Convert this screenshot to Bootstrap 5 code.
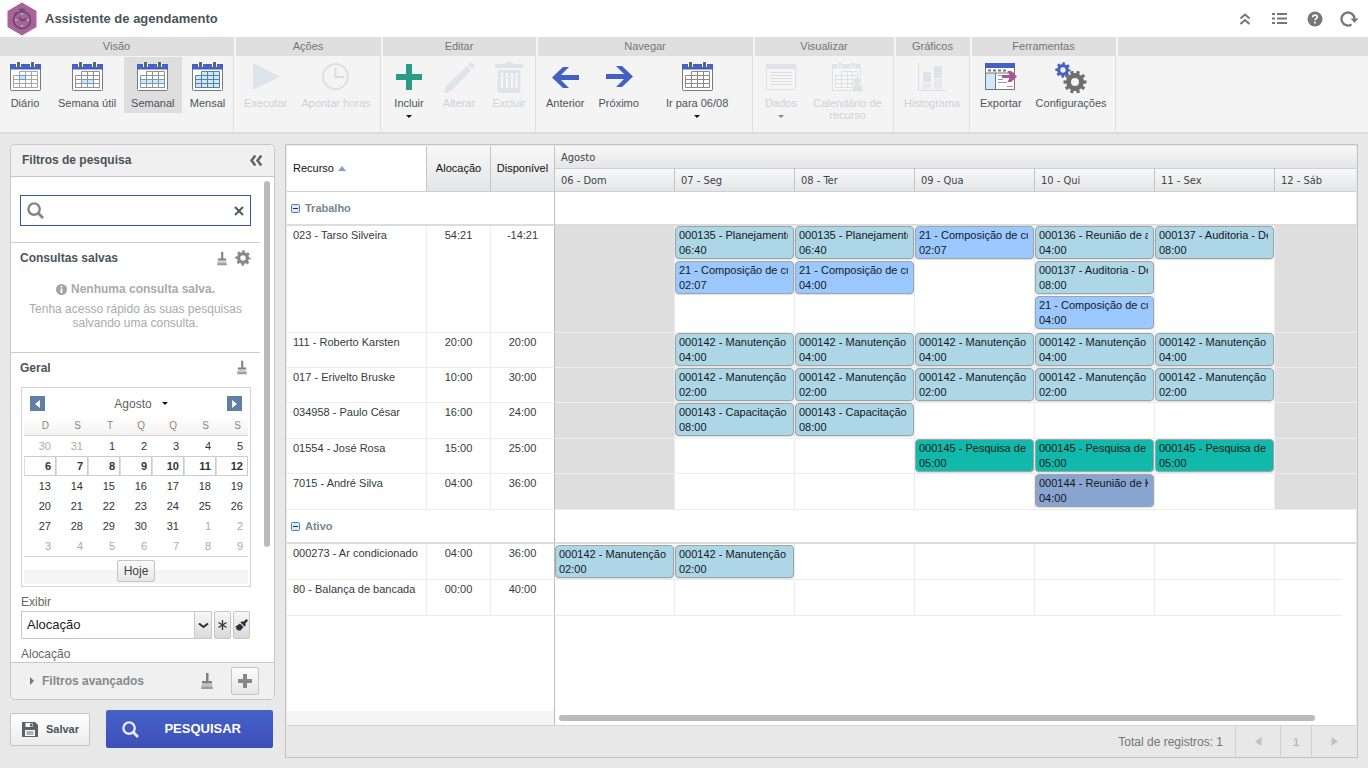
<!DOCTYPE html>
<html lang="pt-BR">
<head>
<meta charset="utf-8">
<meta name="viewport" content="width=device-width, initial-scale=1">
<title>Assistente de agendamento</title>
<link href="https://cdn.jsdelivr.net/npm/bootstrap@5.3.0/dist/css/bootstrap.min.css" rel="stylesheet">
<style>
:root{--ink:#4a5459;--edge:#c8c8c8;--blue:#4460c4}
body{font:12px/14px "Liberation Sans",Arial,sans-serif;color:var(--ink);background:#e8e8e8}
svg{display:block;flex:none}
.app-title{font-size:13px;font-weight:700;line-height:16px;margin:0}
.app-bar{height:37px;padding:0 9px 0 7px}
.tool-set{gap:16px}
.tool-link{width:19px;color:#777;background:none;border:0;padding:0;display:flex;justify-content:center}

/* Ribbon */
.ribbon{background:#f4f4f4;border-bottom:2px solid #dcdcdc;height:97px;font-size:11px}
.ribbon-group{border-right:1px solid #dfdfdf}
.ribbon-group:last-child{border-right:0}
.ribbon-head{height:19px;line-height:19px;background:#dfdfdf;color:#757575;text-align:center;margin:0 0 0 2px;font-size:11px;font-weight:400}
.ribbon-group:first-child .ribbon-head{margin-left:0}
.ribbon-body{padding:1px 0 0 3px}
.ribbon-group:first-child .ribbon-body{padding-left:0;gap:1px}
.w-view{width:234px}.w-act{width:147px}.w-edit{width:155px}.w-nav{width:217px}
.w-vis{width:141px}.w-graph{width:76px}.w-tools{width:146px}
.rb{min-width:50px;height:56px;padding:5px 7px 0;border:0;background:none;color:var(--ink);font-size:11px;line-height:12px;display:flex;flex-direction:column;align-items:center;gap:6px;white-space:nowrap}
.rb.active{background:#dedede}
.rb:disabled{color:#d0d2d4}
.rb.spaced{margin-left:13px}
.rb.two-line{white-space:normal;width:83px}
.icon-tall{margin-bottom:-2px}
.icon-taller{margin-bottom:-4px}
.drop-mark{width:0;height:0;border:3px solid transparent;border-top-color:#111;border-bottom:0}
.rb:disabled .drop-mark{border-top-color:#888}

/* Filters */
.work{padding:10px;gap:10px}
.side{width:265px}
.filter-box{border:1px solid var(--edge);border-radius:5px;background:#fff;overflow:hidden}
.filter-head{height:32px;background:#f0f0f0;border-bottom:1px solid var(--edge);padding:0 12px 1px 11px}
.filter-head h2,.sec-title{font-size:12px;font-weight:700;line-height:14px;margin:0;color:var(--ink)}
.bare{border:0;background:none;padding:0;color:#888}
.filter-scroll{width:249px}
.filter-scroll>section{padding:7px 9px 0}
.sec-line{border-bottom:1px solid #ccc}
.search-sec{height:66px}
.saved-sec{height:110px}
.find{height:31px;border:1px solid #3b51c0;margin-top:11px;padding:0 6px}
.find input{border:0;outline:0;background:none;min-width:0;font-size:12px}
.hint{color:#aaa;text-align:center}
.hint-text{margin:6px 0 0}
.track{width:6px;height:366px;margin:4px 0 0 4px;background:#bababa;border-radius:3px}
.cal{border:1px solid #d4d4d4;padding:0 2px 2px;width:230px;margin:12px 0 0 1px}
.cal-top{height:28px;padding:3px 6px 0 6px}
.month{margin:0 auto;padding-left:10px;gap:10px}
.step{width:15px;height:15px;background:#5d7fa8;border:0;padding:0;color:#fff;display:flex;align-items:center;justify-content:center}
.cal table{width:100%;table-layout:fixed;border-collapse:separate;border-spacing:0;font-size:11px;color:#2e3436}
.cal th{height:20px;font-weight:400;font-size:10px;color:#888;text-align:right;padding:0 7px 0 0;border-bottom:1px solid #d4d4d4;background:linear-gradient(#fff,#f3f3f3)}
.cal td{height:20px;text-align:right;padding:0 5px 0 0;border:0}
.cal .dim{color:#aaa}
.cal .wk td{font-weight:700;border:1px solid #ccc;border-left-color:#ddd;padding-right:4px}
.cal-foot{border-top:1px solid #d4d4d4;height:28px;background:linear-gradient(#fff 50%,#f5f5f5 50%)}
.soft{border:1px solid #c6c6c6;border-radius:2px;background:linear-gradient(#fbfbfb,#e6e6e6);color:#3a4245;padding:0;font-size:12px}
.today{width:38px;height:22px}
.field-label{display:block;margin:8px 0 0 1px;line-height:14px;color:#666}
.show-row{margin:2px 0 0 1px;gap:2px}
.pick{width:191px;height:28px;border:1px solid #c8c8c8;border-radius:0;appearance:none;font-size:13px;color:#222;padding:0 20px 0 5px;
background:url("data:image/svg+xml,%3Csvg xmlns='http://www.w3.org/2000/svg' width='11' height='7'%3E%3Cpath d='M1 1.500l4.500 3.500 4.500-3.500' fill='none' stroke='%23263238' stroke-width='2'/%3E%3C/svg%3E") right 2px center no-repeat,linear-gradient(90deg,#c8c8c8 1px,transparent 1px) right/17px 100% no-repeat,linear-gradient(#f8f8f8,#dadada) right/17px 100% no-repeat,#fff}
.mini{width:17px;height:28px;display:flex;align-items:center;justify-content:center;background:linear-gradient(#f8f8f8,#d8d8d8)}
.filter-area{height:485px;overflow:hidden}
.filter-foot{height:37px;border-top:1px solid var(--edge);background:#f0f0f0;padding:0 15px 0 18px;color:#858585}
.plus-btn{width:28px;height:28px;margin-left:18px;display:flex;align-items:center;justify-content:center}
.action-row{margin-top:10px}
.save{width:80px;height:33px;font-size:11px;font-weight:700;padding:0 10px 0 11px;color:var(--ink);background:linear-gradient(#fff,#ececec)}
.go{width:167px;height:38px;border:0;border-radius:2px;background:linear-gradient(#4562c7,#3f4fba);color:#fff;font-size:13px;font-weight:700;padding:0 32px 0 16px}

/* Schedule */
.sched{border:1px solid #c4c4c4;padding:1px 1px 0;min-width:0}
.plan{width:100%;table-layout:fixed;border-collapse:separate;border-spacing:0;background:#fff;font-size:11px;line-height:15px;color:#333b3e}
.plan th{font-weight:400;height:23px;padding:0 0 0 6px;border-right:1px solid #c4c4c4;border-bottom:1px solid #d0d0d0;background:linear-gradient(#f8f8f8,#e4e5e7);line-height:14px}
.plan th.span-two{color:#111;text-align:center;padding:0 0 1px}
.plan th.sorted{background:#fff;text-align:left;padding-left:6px}
.plan th:last-child{border-right:0}
.plan .tl{font-family:"DejaVu Sans Condensed","Open Sans",sans-serif;color:#3c4548}
.plan .tl th,.plan th.tl{padding-top:1px}
.plan td{padding:0;vertical-align:top;border-right:1px solid #ececec;border-bottom:1px solid #ececec}
.plan td:nth-child(1){padding:2px 0 0 6px;white-space:nowrap}
.plan td:nth-child(2),.plan td:nth-child(3){padding-top:2px;text-align:center}
.plan td:nth-child(3){border-right-color:#bcbcbc}
.plan td:last-child{border-right:0}
.plan tr.h-tall td{height:107px}.plan tr.h-35 td{height:35px}.plan tr.h-36 td{height:36px}
.plan .off td:nth-child(4),.plan .off td:last-child{background:#dedede}
.plan .asset .ev{margin-top:1px}
.plan .asset td:last-child{border-bottom:0;background:linear-gradient(#ececec,#ececec) left bottom/calc(100% - 14px) 1px no-repeat}
.plan tr.kind td{height:34px;border-right:0;border-bottom:2px solid #dcdcdc;padding:0 0 0 4px;vertical-align:middle;font-weight:700;color:#75878f}
.plan tr.kind td:first-child{border-right:1px solid #bcbcbc}
.kind-label{gap:5px}
.ev{display:block;height:33px;border:1px solid #9ba4a8;border-radius:4px;background:#add6e6;color:#15191b;padding:1px 5px 0 3px;text-decoration:none;overflow:hidden;box-shadow:0 1px 1px #0002}
.ev+.ev{margin-top:2px}
.ev span{display:block;overflow:hidden;white-space:nowrap}
.ev.sky{background:#9bc8ff}.ev.teal{background:#10b9aa}.ev.slate{background:#89a4d0}
.rest-left{width:268px;border-right:1px solid #bcbcbc}
.rest-strip{height:14px;background:#f5f5f5}
.h-bar{height:6px;background:#bababa;border-radius:3px;margin:0 41px 4px 4px}
.pager{height:32px;border-top:1px solid #d4d4d4;color:#757575}
.pager-cell{border:0;border-left:1px solid #d0d0d0;background:none;color:#bbb;padding:0;width:45px;display:flex;align-items:center;justify-content:center}
.pager-cell.num{width:31px;font-size:11px;font-weight:700}
</style>
</head>
<body>
<svg width="0" height="0" class="position-absolute" aria-hidden="true">
  <defs>
    <symbol id="calBase" viewBox="0 0 31 29">
      <path d="M.5 7v20.500q0 1 1 1h28q1 0 1-1V7" fill="#fff" stroke="#7a7a7a"/>
      <path d="M0 2h31v5.500H0z" fill="#4460c4"/>
      <path d="M2 4.500h27" stroke="#6c80b5" stroke-dasharray="1 4"/>
      <path d="M6 1h5v4H6zM20 1h5v4h-5z" fill="#fff"/>
      <path d="M7 0h3v5H7zM21 0h3v5h-3z" fill="#56676b"/>
    </symbol>
    <symbol id="calGrid" viewBox="0 0 31 29">
      <path d="M9.500 9.500h18v16h-24v-12h24M3.500 17.500h24M3.500 21.500h24M9.500 9.500v16M15.500 9.500v16M21.500 9.500v16" fill="none" stroke="currentColor"/>
    </symbol>
    <symbol id="gear" viewBox="-12 -12 24 24">
      <circle r="6.500" fill="none" stroke="currentColor" stroke-width="5"/>
      <circle r="9.500" fill="none" stroke="currentColor" stroke-width="4" pathLength="100" stroke-dasharray="5 5" stroke-dashoffset="2.500"/>
    </symbol>
    <symbol id="gearSmall" viewBox="-12 -12 24 24">
      <circle r="6.500" fill="none" stroke="currentColor" stroke-width="5"/>
      <circle r="9.500" fill="none" stroke="currentColor" stroke-width="4" pathLength="96" stroke-dasharray="6 6" stroke-dashoffset="3"/>
    </symbol>
    <symbol id="broom" viewBox="0 0 12 16">
      <path d="M5 0h2.500v8H5zM1 8h10v2.500H1z" fill="#808080"/>
      <path d="M1 11.500h10l1 4.500H0z" fill="#9b9b9b"/><path d="M1 13h10" stroke="#ddd"/>
    </symbol>
    <symbol id="lens" viewBox="0 0 18 18">
      <circle cx="7.500" cy="7.500" r="6" fill="none" stroke="currentColor" stroke-width="2.500"/>
      <path d="M12 12l5 5" stroke="currentColor" stroke-width="3"/>
    </symbol>
    <symbol id="minusBox" viewBox="0 0 9 9">
      <rect x=".5" y=".5" width="8" height="8" rx="1" fill="#dcebf7" stroke="#4f7ca8"/><path d="M2 4.500h5" stroke="#234" />
    </symbol>
  </defs>
</svg>

<div class="d-flex flex-column min-vh-100">
<header class="app-bar bg-white d-flex align-items-center">
  <svg width="30" height="34" viewBox="0 0 30 34" aria-hidden="true">
    <path d="M15 .5L29.500 9v16L15 33.500.500 25V9z" fill="#a9629c"/>
    <g fill="none" stroke="#55515c"><circle cx="15" cy="18" r="8.500" stroke-width="1.500"/><path d="M12 7.500h6M15 8v2M12 15l3 3.500 4-1.500M7.500 11l2 2" stroke-width="1.500"/><path d="M15 11v2M15 23v2M8 18h2M20 18h2" stroke="#e6d3e4"/></g>
  </svg>
  <h1 class="app-title ms-2">Assistente de agendamento</h1>
  <div class="ms-auto d-flex align-items-center tool-set">
    <button class="tool-link" aria-label="Recolher"><svg width="10" height="12" viewBox="0 0 10 12"><path d="M.5 5.500L5 1.500l4.500 4M.5 11L5 7l4.500 4" fill="none" stroke="currentColor" stroke-width="2"/></svg></button>
    <button class="tool-link" aria-label="Lista"><svg width="15" height="11" viewBox="0 0 15 11"><path d="M0 1h3M5 1h10M0 5.500h3M5 5.500h10M0 10h3M5 10h10" stroke="currentColor" stroke-width="2"/></svg></button>
    <button class="tool-link" aria-label="Ajuda"><svg width="16" height="16" viewBox="0 0 16 16"><circle cx="8" cy="8" r="7.500" fill="currentColor"/><path d="M5.700 6.200C5.800 3.300 10.300 3.400 10.200 6c0 1.600-2.200 1.600-2.200 3.300M8 10.700v1.800" fill="none" stroke="#fff" stroke-width="1.700"/></svg></button>
    <button class="tool-link" aria-label="Atualizar"><svg width="19" height="16" viewBox="0 0 19 16"><path d="M11.500 13.500A6.500 6.500 0 1 1 14.500 8" fill="none" stroke="currentColor" stroke-width="2.300"/><path d="M10.500 7.500h8l-4 4.500z" fill="currentColor"/></svg></button>
  </div>
</header>

<nav class="ribbon d-flex" aria-label="Ferramentas do agendamento">
  <div class="ribbon-group w-view flex-shrink-0"><h2 class="ribbon-head">Visão</h2>
    <div class="ribbon-body d-flex">
      <button class="rb"><svg width="31" height="29" viewBox="0 0 31 29"><use href="#calBase"/><path d="M9.500 13.500h6v4h-6z" fill="#cfe8fb"/><use href="#calGrid" color="#a6a6a6"/><path d="M9.500 13.500h6v4h-6z" fill="none" stroke="#6d9cc0"/></svg>Diário</button>
      <button class="rb"><svg width="31" height="29" viewBox="0 0 31 29"><use href="#calBase"/><path d="M9.500 17.500h12v4h-12z" fill="#cfe8fb"/><use href="#calGrid" color="#929292"/><path d="M9.500 17.500h12v4h-12z" fill="none" stroke="#6d9cc0"/></svg>Semana útil</button>
      <button class="rb active"><svg width="31" height="29" viewBox="0 0 31 29"><use href="#calBase"/><path d="M3.500 17.500h24v4h-24z" fill="#cfe8fb"/><use href="#calGrid" color="#929292"/><path d="M3.500 17.500h24v4h-24z" fill="none" stroke="#6d9cc0"/></svg>Semanal</button>
      <button class="rb"><svg width="31" height="29" viewBox="0 0 31 29"><use href="#calBase"/><path d="M9.500 9.500h18v16h-24v-12h6z" fill="#cfe8fb"/><use href="#calGrid" color="#58809f"/></svg>Mensal</button>
    </div></div>
  <div class="ribbon-group w-act flex-shrink-0"><h2 class="ribbon-head">Ações</h2>
    <div class="ribbon-body d-flex">
      <button class="rb" disabled><svg width="28" height="29" viewBox="0 0 28 29"><path d="M1 1l27 13.500L1 28z" fill="#dde4ea"/></svg>Executar</button>
      <button class="rb" disabled><svg width="29" height="29" viewBox="0 0 29 29"><circle cx="14.500" cy="14.500" r="12.500" fill="none" stroke="#e0e0e2" stroke-width="2"/><path d="M14.500 6v9H23" fill="none" stroke="#dcdde0" stroke-width="2"/></svg>Apontar horas</button>
    </div></div>
  <div class="ribbon-group w-edit flex-shrink-0"><h2 class="ribbon-head">Editar</h2>
    <div class="ribbon-body d-flex">
      <button class="rb"><svg width="28" height="29" viewBox="0 0 28 29"><path d="M11 2h6v10h10v6H17v10h-6V18H1v-6h10z" fill="#2b9c84"/></svg>Incluir<span class="drop-mark"></span></button>
      <button class="rb" disabled><svg width="32" height="31" viewBox="0 0 32 31" class="icon-tall"><path d="M3 24L24 4l4 4L8 29l-7 2z" fill="#e0e2e7"/><path d="M6 25L24 7" stroke="#d9e8f2" stroke-width="2"/><path d="M25 3l3-3 4 4-3 3z" fill="#e0e2e7"/></svg>Alterar</button>
      <button class="rb" disabled><svg width="28" height="31" viewBox="0 0 28 31" class="icon-tall"><path d="M0 3q0-1 1-1h9q0-2 4-2t4 2h9q1 0 1 1v3H0zM2.500 8h23v21q0 2-2 2h-19q-2 0-2-2z" fill="#e0e2e7"/><path d="M7 11v15M12 11v15M17 11v15M21.500 11v15" stroke="#f4f4f4" stroke-width="2.500"/></svg>Excluir</button>
    </div></div>
  <div class="ribbon-group w-nav flex-shrink-0"><h2 class="ribbon-head">Navegar</h2>
    <div class="ribbon-body d-flex">
      <button class="rb"><svg width="28" height="29" viewBox="0 0 28 29"><path d="M1 15.500L12 5h6l-8 8h18v5H10l8 8h-6z" fill="#4460c4"/></svg>Anterior</button>
      <button class="rb"><svg width="28" height="29" viewBox="0 0 28 29"><path d="M28 14.500L17 4h-6l8 8H1v5h18l-8 8h6z" fill="#4460c4"/></svg>Próximo</button>
      <button class="rb spaced"><svg width="31" height="29" viewBox="0 0 31 29"><use href="#calBase"/><use href="#calGrid" color="#8a8a8a"/></svg>Ir para 06/08<span class="drop-mark"></span></button>
    </div></div>
  <div class="ribbon-group w-vis flex-shrink-0"><h2 class="ribbon-head">Visualizar</h2>
    <div class="ribbon-body d-flex align-items-start">
      <button class="rb" disabled><svg width="30" height="29" viewBox="0 0 30 29"><path d="M.5 2.500h29v25H.5z" fill="#f6f6f6" stroke="#dfe0e2"/><path d="M0 2h30v5H0z" fill="#dde3e9"/><path d="M4 10.500h22M4 13.500h22M4 16.500h22M4 19.500h22M4 22.500h22" stroke="#dcdee0"/></svg>Dados<span class="drop-mark"></span></button>
      <button class="rb two-line" disabled><svg width="31" height="31" viewBox="0 0 31 31" class="icon-tall"><path d="M.5 3.500h28v25H.5z" fill="#f6f6f6" stroke="#dfe0e2"/><path d="M0 2h29v4.500H0z" fill="#dfe2e7"/><path d="M6 0h4v5H6zM19 0h4v5h-4z" fill="#e0e0e2" stroke="#f4f4f4"/><path d="M9.500 9.500h16v16h-22v-12h22M3.500 17.500h22M3.500 21.500h20M9.500 9.500v16M15.500 9.500v16M20.500 9.500v16" fill="none" stroke="#dfe0e2"/><path d="M25.500 15a4 4 0 0 1 2 7.500q4 1 3.500 7.500H20q-.5-6.500 3.500-7.500a4 4 0 0 1 2-7.500" fill="#dfe2e7" stroke="#f4f4f4"/></svg>Calendário de recurso</button>
    </div></div>
  <div class="ribbon-group w-graph flex-shrink-0"><h2 class="ribbon-head">Gráficos</h2>
    <div class="ribbon-body d-flex">
      <button class="rb" disabled><svg width="28" height="29" viewBox="0 0 28 29"><path d="M.5 1v27.500H28" fill="none" stroke="#dedfe1"/><path d="M5 10h8v10H5zM16 4h8v12h-8z" fill="#dce4ea"/><path d="M5 21h8v6H5zM16 17h8v10h-8z" fill="#e8e8ea"/></svg>Histograma</button>
    </div></div>
  <div class="ribbon-group w-tools flex-shrink-0"><h2 class="ribbon-head">Ferramentas</h2>
    <div class="ribbon-body d-flex">
      <button class="rb"><svg width="32" height="29" viewBox="0 0 32 29"><path d="M.5 1.500h29v26H.5z" fill="#fff" stroke="#777"/><path d="M0 1h30v5H0z" fill="#4460c4"/><path d="M3 8.500h20" stroke="#777" stroke-width="2" stroke-dasharray="3 2"/><path d="M1 11h9.500v16H1z" fill="#cfe8fb"/><path d="M0 11h30M10.500 11v16" stroke="#777"/><path d="M13 13.500h5M13 17.500h5M13 20.500h9M22 24.500h6" stroke="#999"/><path d="M17 13h7.500l-2-4h3.500l6 5.500-6 5.500h-3.500l2-4H17z" fill="#a5559a"/></svg>Exportar</button>
      <button class="rb"><svg width="32" height="33" viewBox="0 0 32 33" class="icon-taller"><use href="#gearSmall" x="0" y="0" width="16" height="16" color="#4460c4"/><use href="#gear" x="8" y="8" width="24" height="24" color="#6e6e6e"/></svg>Configurações</button>
    </div></div>
  <div class="ribbon-group flex-grow-1"><div class="ribbon-head"></div></div>
</nav>

<main class="work d-flex flex-grow-1">
<aside class="side flex-shrink-0 d-flex flex-column">
  <div class="filter-box">
    <div class="filter-head d-flex align-items-center justify-content-between"><h2>Filtros de pesquisa</h2>
      <button class="bare" aria-label="Recolher filtros"><svg width="12" height="11" viewBox="0 0 12 11"><path d="M5.300 .5L1.500 5.500l3.800 5M11.300 .5L7.500 5.500l3.800 5" fill="none" stroke="#5d666a" stroke-width="2.500"/></svg></button></div>
    <div class="filter-area d-flex">
      <div class="filter-scroll">
        <section class="search-sec sec-line">
          <div class="find d-flex align-items-center"><svg width="17" height="17" color="#858585"><use href="#lens"/></svg><input type="text" class="flex-grow-1" aria-label="Pesquisar filtros"><button class="bare" aria-label="Limpar"><svg width="10" height="10" viewBox="0 0 10 10"><path d="M1 1l8 8M9 1L1 9" stroke="#4d5a5e" stroke-width="2"/></svg></button></div>
        </section>
        <section class="saved-sec sec-line">
          <div class="d-flex align-items-center"><h3 class="sec-title flex-grow-1">Consultas salvas</h3><button class="bare me-2" aria-label="Limpar consultas"><svg width="10" height="15"><use href="#broom"/></svg></button><button class="bare" aria-label="Configurar consultas"><svg width="16" height="16"><use href="#gearSmall"/></svg></button></div>
          <p class="hint fw-bold d-flex align-items-center justify-content-center gap-1 mt-3 mb-0"><svg width="11" height="11" viewBox="0 0 11 11"><circle cx="5.500" cy="5.500" r="5.500" fill="#a3a3a3"/><path d="M5.500 2v1.500M5.500 4.500V9" stroke="#fff" stroke-width="1.800"/></svg><span>Nenhuma consulta salva.</span></p>
          <p class="hint hint-text">Tenha acesso rápido às suas pesquisas salvando uma consulta.</p>
        </section>
        <section>
          <div class="d-flex align-items-center"><h3 class="sec-title flex-grow-1">Geral</h3><button class="bare me-1" aria-label="Limpar geral"><svg width="10" height="15"><use href="#broom"/></svg></button></div>
          <div class="cal">
            <div class="cal-top d-flex align-items-center">
              <button class="step" aria-label="Mês anterior"><svg width="5" height="8" viewBox="0 0 5 8"><path d="M5 0v8L0 4z" fill="#fff"/></svg></button>
              <button class="bare month d-flex align-items-center text-body-secondary">Agosto<span class="drop-mark"></span></button>
              <button class="step" aria-label="Próximo mês"><svg width="5" height="8" viewBox="0 0 5 8"><path d="M0 0v8l5-4z" fill="#fff"/></svg></button>
            </div>
            <table>
              <thead><tr><th>D</th><th>S</th><th>T</th><th>Q</th><th>Q</th><th>S</th><th>S</th></tr></thead>
              <tbody>
                <tr><td class="dim">30</td><td class="dim">31</td><td>1</td><td>2</td><td>3</td><td>4</td><td>5</td></tr>
                <tr class="wk"><td>6</td><td>7</td><td>8</td><td>9</td><td>10</td><td>11</td><td>12</td></tr>
                <tr><td>13</td><td>14</td><td>15</td><td>16</td><td>17</td><td>18</td><td>19</td></tr>
                <tr><td>20</td><td>21</td><td>22</td><td>23</td><td>24</td><td>25</td><td>26</td></tr>
                <tr><td>27</td><td>28</td><td>29</td><td>30</td><td>31</td><td class="dim">1</td><td class="dim">2</td></tr>
                <tr class="dim"><td class="dim">3</td><td class="dim">4</td><td class="dim">5</td><td class="dim">6</td><td class="dim">7</td><td class="dim">8</td><td class="dim">9</td></tr>
              </tbody>
            </table>
            <div class="cal-foot d-flex align-items-center justify-content-center"><button class="soft today">Hoje</button></div>
          </div>
          <label class="field-label" for="show">Exibir</label>
          <div class="d-flex show-row">
            <select id="show" class="pick"><option>Alocação</option></select>
            <button class="soft mini" aria-label="Selecionar"><svg width="9" height="10" viewBox="0 0 9 10"><path d="M4.500 0v10M.5 2.500l8 5M8.500 2.500l-8 5" stroke="#333" stroke-width="1.300"/></svg></button>
            <button class="soft mini" aria-label="Limpar campo"><svg width="13" height="13" viewBox="0 0 13 13"><path d="M11.500 0L13 1.500 10 5l1 1-1.500 1.500-4-4L7 2l1 1zM5 4.500L8.500 8 5 12l-1-1-1 1-1-2-1 .5.5-2L0 8z" fill="#263238"/></svg></button>
          </div>
          <span class="field-label">Alocação</span>
        </section>
      </div>
      <div class="track"></div>
    </div>
    <div class="filter-foot d-flex align-items-center">
      <button class="bare d-flex align-items-center fw-bold me-auto"><svg width="5" height="8" viewBox="0 0 5 8" class="me-2"><path d="M1 0v8l4-4z" fill="#777"/></svg>Filtros avançados</button>
      <button class="bare" aria-label="Limpar filtros"><svg width="12" height="16"><use href="#broom"/></svg></button>
      <button class="soft plus-btn" aria-label="Adicionar filtro"><svg width="14" height="14" viewBox="0 0 14 14"><path d="M5 0h4v5h5v4H9v5H5V9H0V5h5z" fill="#888"/></svg></button>
    </div>
  </div>
  <div class="d-flex align-items-center gap-3 action-row">
    <button class="soft save d-flex align-items-center justify-content-between"><svg width="16" height="15" viewBox="0 0 16 15"><path d="M0 0h13l3 3v12H0z" fill="#56636a"/><path d="M3.500 1h7v4h-7zM3 8h10v6H3z" fill="#fff"/><path d="M8 1.500h2v3H8zM4.500 9.500h7v1h-7zM4.500 11.500h7v1h-7z" fill="#56636a"/></svg>Salvar</button>
    <button class="go d-flex align-items-center justify-content-between"><svg width="17" height="17" color="#e8ebf8"><use href="#lens"/></svg>PESQUISAR</button>
  </div>
</aside>

<section class="sched flex-grow-1 d-flex flex-column" aria-label="Agenda semanal">
  <table class="plan">
    <colgroup><col style="width:140px"><col style="width:64px"><col style="width:64px"><col style="width:120px"><col style="width:120px"><col style="width:120px"><col style="width:120px"><col style="width:120px"><col style="width:120px"><col></colgroup>
    <thead>
      <tr><th rowspan="2" class="span-two sorted"><span class="d-flex align-items-center gap-1">Recurso<svg width="8" height="5" viewBox="0 0 8 5"><path d="M0 5l4-5 4 5z" fill="#7f9fd6"/></svg></span></th><th rowspan="2" class="span-two">Alocação</th><th rowspan="2" class="span-two">Disponível</th><th colspan="7" class="tl">Agosto</th></tr>
      <tr class="tl"><th>06 - Dom</th><th>07 - Seg</th><th>08 - Ter</th><th>09 - Qua</th><th>10 - Qui</th><th>11 - Sex</th><th>12 - Sáb</th></tr>
    </thead>
    <tbody class="off">
      <tr class="kind"><td colspan="3"><span class="d-flex align-items-center kind-label"><svg width="9" height="9"><use href="#minusBox"/></svg>Trabalho</span></td><td colspan="7" class="bg-white"></td></tr>
      <tr class="h-tall"><td>023 - Tarso Silveira</td><td>54:21</td><td>-14:21</td><td></td>
        <td><a href="#" class="ev"><span>000135 - Planejamento</span><span>06:40</span></a><a href="#" class="ev sky"><span>21 - Composição de custos</span><span>02:07</span></a></td>
        <td><a href="#" class="ev"><span>000135 - Planejamento</span><span>06:40</span></a><a href="#" class="ev sky"><span>21 - Composição de custos</span><span>04:00</span></a></td>
        <td><a href="#" class="ev sky"><span>21 - Composição de custos</span><span>02:07</span></a></td>
        <td><a href="#" class="ev"><span>000136 - Reunião de a</span><span>04:00</span></a><a href="#" class="ev"><span>000137 - Auditoria - De</span><span>08:00</span></a><a href="#" class="ev sky"><span>21 - Composição de custos</span><span>04:00</span></a></td>
        <td><a href="#" class="ev"><span>000137 - Auditoria - De</span><span>08:00</span></a></td><td></td></tr>
      <tr class="h-35"><td>111 - Roberto Karsten</td><td>20:00</td><td>20:00</td><td></td>
        <td><a href="#" class="ev"><span>000142 - Manutenção</span><span>04:00</span></a></td><td><a href="#" class="ev"><span>000142 - Manutenção</span><span>04:00</span></a></td><td><a href="#" class="ev"><span>000142 - Manutenção</span><span>04:00</span></a></td><td><a href="#" class="ev"><span>000142 - Manutenção</span><span>04:00</span></a></td><td><a href="#" class="ev"><span>000142 - Manutenção</span><span>04:00</span></a></td><td></td></tr>
      <tr class="h-35"><td>017 - Erivelto Bruske</td><td>10:00</td><td>30:00</td><td></td>
        <td><a href="#" class="ev"><span>000142 - Manutenção</span><span>02:00</span></a></td><td><a href="#" class="ev"><span>000142 - Manutenção</span><span>02:00</span></a></td><td><a href="#" class="ev"><span>000142 - Manutenção</span><span>02:00</span></a></td><td><a href="#" class="ev"><span>000142 - Manutenção</span><span>02:00</span></a></td><td><a href="#" class="ev"><span>000142 - Manutenção</span><span>02:00</span></a></td><td></td></tr>
      <tr class="h-36"><td>034958 - Paulo César</td><td>16:00</td><td>24:00</td><td></td>
        <td><a href="#" class="ev"><span>000143 - Capacitação</span><span>08:00</span></a></td><td><a href="#" class="ev"><span>000143 - Capacitação</span><span>08:00</span></a></td><td></td><td></td><td></td><td></td></tr>
      <tr class="h-35"><td>01554 - José Rosa</td><td>15:00</td><td>25:00</td><td></td><td></td><td></td>
        <td><a href="#" class="ev teal"><span>000145 - Pesquisa de</span><span>05:00</span></a></td><td><a href="#" class="ev teal"><span>000145 - Pesquisa de</span><span>05:00</span></a></td><td><a href="#" class="ev teal"><span>000145 - Pesquisa de</span><span>05:00</span></a></td><td></td></tr>
      <tr class="h-36"><td>7015 - André Silva</td><td>04:00</td><td>36:00</td><td></td><td></td><td></td><td></td>
        <td><a href="#" class="ev slate"><span>000144 - Reunião de K</span><span>04:00</span></a></td><td></td><td></td></tr>
    </tbody>
    <tbody>
      <tr class="kind"><td colspan="3"><span class="d-flex align-items-center kind-label"><svg width="9" height="9"><use href="#minusBox"/></svg>Ativo</span></td><td colspan="7"></td></tr>
      <tr class="h-36 asset"><td>000273 - Ar condicionado</td><td>04:00</td><td>36:00</td>
        <td><a href="#" class="ev"><span>000142 - Manutenção</span><span>02:00</span></a></td><td><a href="#" class="ev"><span>000142 - Manutenção</span><span>02:00</span></a></td><td></td><td></td><td></td><td></td><td></td></tr>
      <tr class="h-36 asset"><td>80 - Balança de bancada</td><td>00:00</td><td>40:00</td><td></td><td></td><td></td><td></td><td></td><td></td><td></td></tr>
    </tbody>
  </table>
  <div class="d-flex flex-grow-1 bg-white">
    <div class="rest-left d-flex flex-column justify-content-end"><div class="rest-strip"></div></div>
    <div class="flex-grow-1 d-flex flex-column justify-content-end"><div class="h-bar"></div></div>
  </div>
  <footer class="pager d-flex justify-content-end align-items-stretch">
    <span class="align-self-center me-2 pe-1">Total de registros: 1</span>
    <button class="pager-cell" aria-label="Página anterior"><svg width="7" height="9" viewBox="0 0 7 9"><path d="M6.500 0v9L0 4.500z" fill="#c2c2c2"/></svg></button>
    <button class="pager-cell num">1</button>
    <button class="pager-cell" aria-label="Próxima página"><svg width="7" height="9" viewBox="0 0 7 9"><path d="M.5 0v9L7 4.500z" fill="#c2c2c2"/></svg></button>
  </footer>
</section>
</main>
</div>
<script src="https://cdn.jsdelivr.net/npm/bootstrap@5.3.0/dist/js/bootstrap.bundle.min.js"></script>
</body>
</html>
